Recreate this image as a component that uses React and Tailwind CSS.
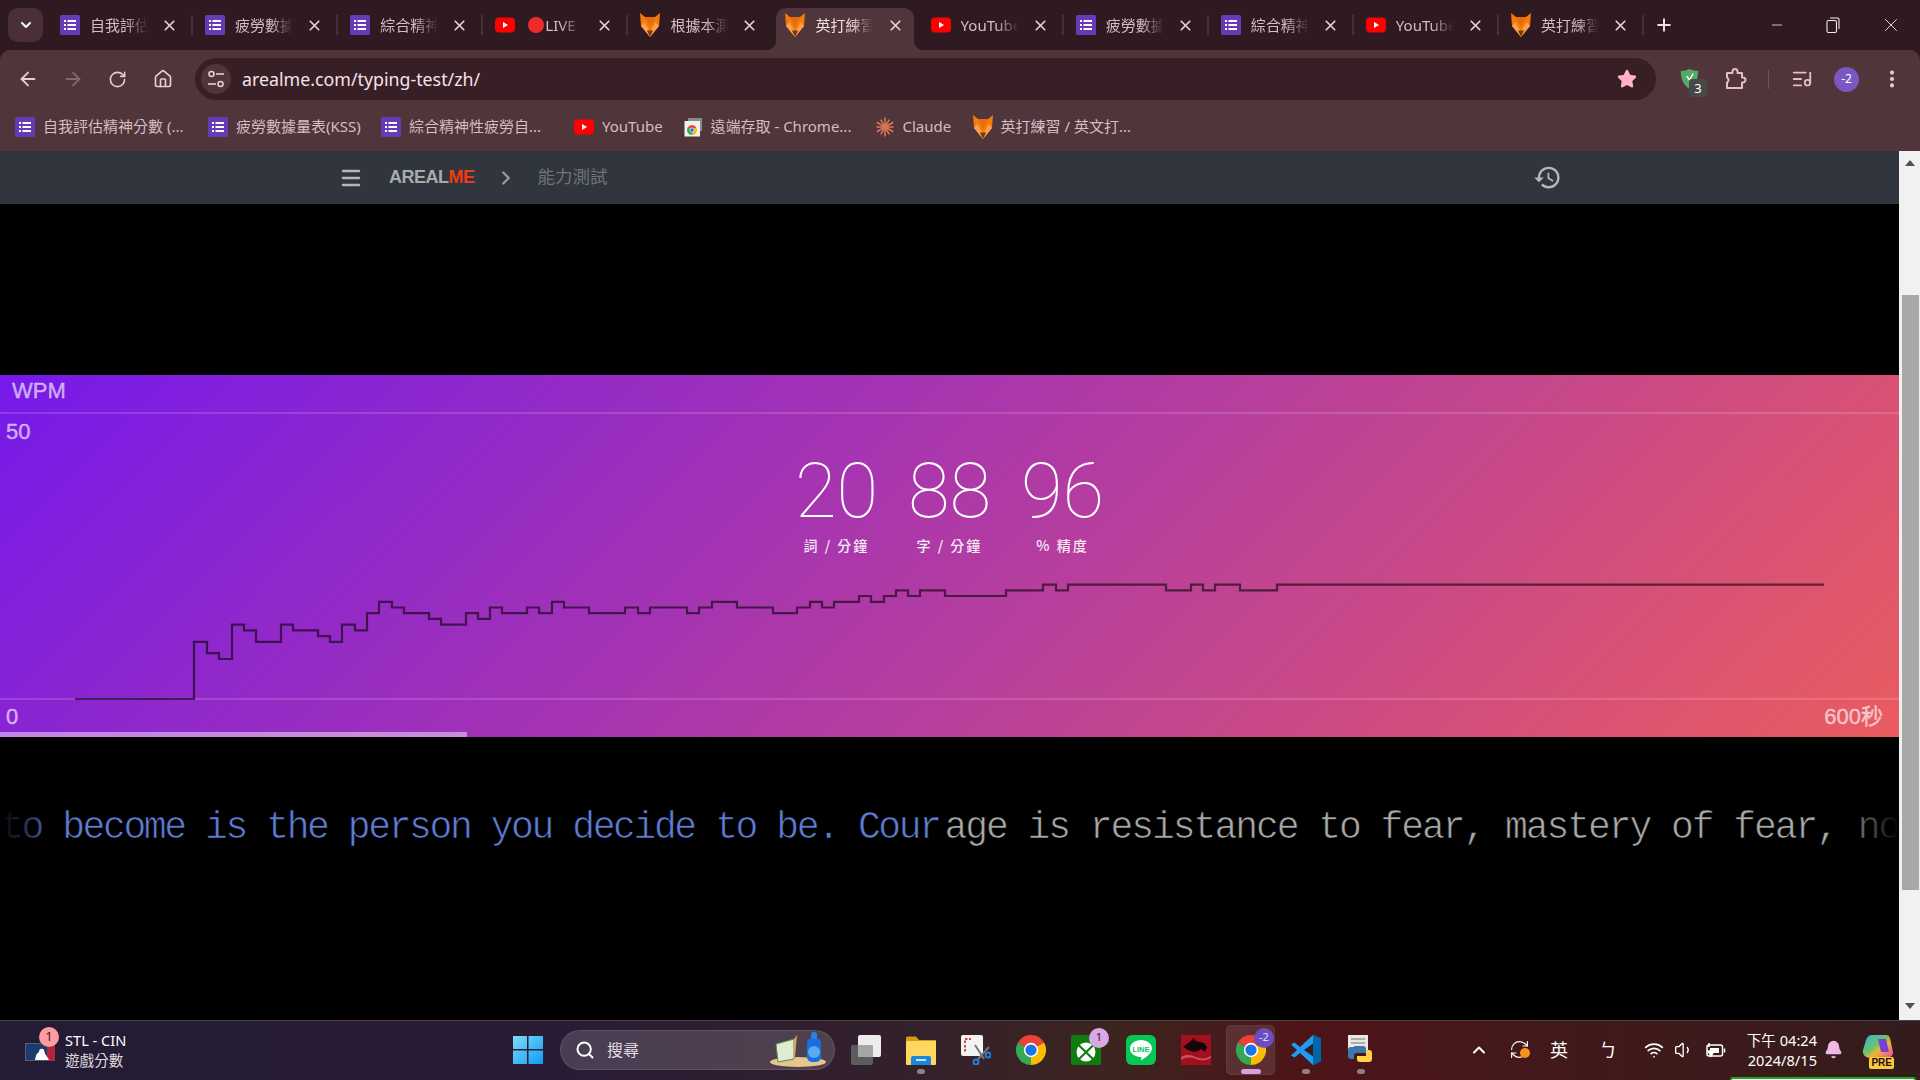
import React from 'react';
import {
  ArrowLeft, ArrowRight, Bell, ChevronDown, ChevronRight, ChevronUp, EllipsisVertical, House,
  ListMusic, Menu, Minus, Plus, RefreshCw, RotateCw, Search, Star, Volume1, Wifi, X,
} from 'lucide-react';

function FormsIcon({ size = 20 }) {
  return (
    <svg width={size} height={size} viewBox="0 0 20 20" className="shrink-0">
      <rect width="20" height="20" rx="1.5" fill="#673ab7" />
      <g fill="#fff">
        <rect x="4" y="5" width="2" height="2" />
        <rect x="7.5" y="5" width="8.5" height="2" />
        <rect x="4" y="9" width="2" height="2" />
        <rect x="7.5" y="9" width="8.5" height="2" />
        <rect x="4" y="13" width="2" height="2" />
        <rect x="7.5" y="13" width="8.5" height="2" />
      </g>
    </svg>
  );
}

function YouTubeIcon({ size = 20 }) {
  return (
    <svg width={size} height={size} viewBox="0 0 20 20" className="shrink-0">
      <rect y="2.5" width="20" height="15" rx="4" fill="#f00" />
      <path d="M8 7l5 3-5 3z" fill="#fff" />
    </svg>
  );
}

function FoxIcon({ size = 20 }) {
  return (
    <svg width={size} height={size + 4} viewBox="0 0 20 24" className="shrink-0">
      <path d="M0 0l5 4h10l5-4-1 13-9 11-9-11z" fill="#f47a0e" />
      <path d="M5 4h10l-5 10z" fill="#e86d05" />
      <path d="M1 13l3.500-4L10 19l5.500-10 3.500 4-9 11z" fill="#f8a050" />
      <path d="M7 17.500h6L10 24z" fill="#7a3a08" />
    </svg>
  );
}

function ClaudeIcon() {
  const rays = [0, 30, 60, 90, 120, 150, 180, 210, 240, 270, 300, 330];
  return (
    <svg width="20" height="20" viewBox="0 0 20 20" className="shrink-0">
      {rays.map((r, i) => (
        <rect key={r} x="9.2" y={i % 2 ? 1.5 : 0.5} width="1.6" height="9" fill="#d97757" transform={`rotate(${r} 10 10)`} />
      ))}
    </svg>
  );
}

function ChromeIcon({ size = 30 }) {
  return (
    <svg width={size} height={size} viewBox="0 0 48 48" className="shrink-0">
      <path d="M24 24L3.2 12A24 24 0 0 1 44.8 12z" fill="#ea4335" />
      <path d="M24 24L44.8 12A24 24 0 0 1 24 48z" fill="#fbbc04" />
      <path d="M24 24L24 48A24 24 0 0 1 3.2 12z" fill="#34a853" />
      <circle cx="24" cy="24" r="11.5" fill="#fff" />
      <circle cx="24" cy="24" r="9" fill="#1a73e8" />
    </svg>
  );
}

function RemoteIcon() {
  return (
    <svg width="18" height="20" viewBox="0 0 18 20" className="shrink-0">
      <rect x="4" y="1" width="14" height="13" fill="#8a8a8a" />
      <rect x="0.5" y="4" width="15.5" height="15.5" fill="#f1f1f1" />
      <g transform="translate(3 8) scale(0.21)">
        <path d="M24 24L3.2 12A24 24 0 0 1 44.8 12z" fill="#ea4335" />
        <path d="M24 24L44.8 12A24 24 0 0 1 24 48z" fill="#fbbc04" />
        <path d="M24 24L24 48A24 24 0 0 1 3.2 12z" fill="#34a853" />
        <circle cx="24" cy="24" r="10" fill="#1a73e8" stroke="#fff" strokeWidth="3" />
      </g>
    </svg>
  );
}

function TabIcon({ type }) {
  if (type === 'forms') return <FormsIcon />;
  if (type === 'yt') return <YouTubeIcon />;
  return <FoxIcon />;
}

const tabs = [
  { icon: 'forms', title: '自我評估' },
  { icon: 'forms', title: '疲勞數據' },
  { icon: 'forms', title: '綜合精神' },
  { icon: 'yt', title: 'LIVE', live: true },
  { icon: 'fox', title: '根據本測' },
  { icon: 'fox', title: '英打練習', active: true },
  { icon: 'yt', title: 'YouTube' },
  { icon: 'forms', title: '疲勞數據' },
  { icon: 'forms', title: '綜合精神' },
  { icon: 'yt', title: 'YouTube' },
  { icon: 'fox', title: '英打練習' },
];

function Tab({ tab, showSep }) {
  return (
    <div className="relative h-[50px] w-[145.100px] shrink-0">
      {tab.active && (
        <>
          <div className="absolute left-1 right-1 top-2 bottom-0 rounded-t-[10px] bg-[#50353b]" />
          <div className="absolute bottom-0 left-[-6px] h-[10px] w-[10px] bg-[radial-gradient(circle_at_0_0,transparent_10px,#50353b_10.5px)]" />
          <div className="absolute bottom-0 right-[-6px] h-[10px] w-[10px] bg-[radial-gradient(circle_at_100%_0,transparent_10px,#50353b_10.5px)]" />
        </>
      )}
      <div className="relative flex h-full items-center pl-[13px] pr-[14px]">
        <div className="flex w-[20px] justify-center"><TabIcon type={tab.icon} /></div>
        <div className={`ml-[10px] flex w-[58px] items-center overflow-hidden whitespace-nowrap text-[15px] [mask-image:linear-gradient(90deg,#000_60%,transparent)] ${tab.active ? 'text-[#f0dfe3]' : 'text-[#d8bcc3]'}`}>
          {tab.live && <span className="ml-[3px] mr-[1px] inline-block h-[16px] w-[16px] shrink-0 rounded-full bg-[#ee2a2a]" />}
          {tab.title}
        </div>
        <X className="ml-auto text-[#e8cdd3]" size={17} strokeWidth={2.4} />
      </div>
      {showSep && <div className="absolute right-[-1px] top-[15px] h-[20px] w-[2px] bg-[#4a3036]" />}
    </div>
  );
}

function TabStrip() {
  return (
    <div className="flex h-[50px] items-center bg-[#301a21] pl-2">
      <div className="flex h-[34px] w-[35px] items-center justify-center rounded-[10px] bg-[#4a3036] text-white">
        <ChevronDown size={16} strokeWidth={3} />
      </div>
      <div className="ml-1 flex">
        {tabs.map((t, i) => (
          <Tab key={i} tab={t} showSep={i !== 4 && i !== 5} />
        ))}
      </div>
      <Plus className="ml-[11px] text-[#f0dde1]" size={20} strokeWidth={2.4} />
      <div className="ml-auto flex items-center text-[#f3e8ea]">
        <div className="flex w-[54px] justify-center"><Minus size={16} strokeWidth={1.2} /></div>
        <div className="flex w-[58px] justify-center">
          <svg width="14" height="16" viewBox="0 0 14 16" fill="none" stroke="currentColor" strokeWidth="1.1">
            <rect x="1" y="3.5" width="9.5" height="12" rx="1.5" />
            <path d="M4 1h7.5A1.5 1.5 0 0 1 13 2.5V12" />
          </svg>
        </div>
        <div className="flex w-[58px] justify-center"><X size={22} strokeWidth={1} /></div>
      </div>
    </div>
  );
}

function NavSlot({ children, className = '' }) {
  return <div className={`flex w-[45px] shrink-0 items-center justify-center ${className}`}>{children}</div>;
}

function TuneIcon() {
  return (
    <svg width="16" height="18" viewBox="0 0 16 18" fill="none" stroke="#e8cdd3" strokeWidth="1.6">
      <circle cx="3.5" cy="4" r="2.5" />
      <path d="M8 4h8" />
      <circle cx="12.5" cy="14" r="2.5" />
      <path d="M0 14h8" />
    </svg>
  );
}

function ExtensionIcon() {
  return (
    <svg width="24" height="24" viewBox="0 0 24 24" fill="none" stroke="#e8bcc6" strokeWidth="2" strokeLinejoin="round">
      <path d="M4 6h5.500V4.500a2.500 2.500 0 0 1 5 0V6H19v4.500h1a2.500 2.500 0 0 1 0 5h-1V21H4v-5.500a2.800 2.800 0 0 0 0-5z" />
    </svg>
  );
}

const bookmarks = [
  { icon: <FormsIcon />, label: '自我評估精神分數 (...', width: 'w-[139px]', gap: 'mr-[26px]' },
  { icon: <FormsIcon />, label: '疲勞數據量表(KSS)', width: 'w-[125px]', gap: 'mr-[20px]' },
  { icon: <FormsIcon />, label: '綜合精神性疲勞自...', width: 'w-[131px]', gap: 'mr-[34px]' },
  { icon: <YouTubeIcon />, label: 'YouTube', width: 'w-[60px]', gap: 'mr-[20.500px]' },
  { icon: <RemoteIcon />, label: '遠端存取 - Chrome...', width: 'w-[142px]', gap: 'mr-[22px]' },
  { icon: <ClaudeIcon />, label: 'Claude', width: 'w-[50px]', gap: 'mr-[20px]' },
  { icon: <FoxIcon />, label: '英打練習 / 英文打...', width: 'w-[130px]', gap: '' },
];

function Toolbar() {
  return (
    <div className="h-[101px] rounded-t-[10px] bg-[#50353b]">
      <div className="flex h-[50px] items-end pl-[5px]">
        <div className="flex h-[42px] items-center">
          <NavSlot><ArrowLeft size={22} className="text-[#e8cdd3]" strokeWidth={2} /></NavSlot>
          <NavSlot><ArrowRight size={22} className="text-[#85686e]" strokeWidth={2} /></NavSlot>
          <NavSlot><RotateCw size={19} className="text-[#e8cdd3]" strokeWidth={2} /></NavSlot>
          <NavSlot><House size={20} className="text-[#e8cdd3]" strokeWidth={2} /></NavSlot>
        </div>
        <div className="ml-[10px] flex h-[42px] w-[1461px] items-center rounded-full bg-[#381f26] pl-[6px] pr-[19px]">
          <div className="flex h-[30px] w-[30px] items-center justify-center rounded-full bg-[#50353b]"><TuneIcon /></div>
          <span className="ml-[11px] text-[17.800px] text-[#f3e4e7]">arealme.com/typing-test/zh/</span>
          <Star className="ml-auto" size={20} fill="#ffb3c4" color="#ffb3c4" />
        </div>
        <div className="ml-[11px] flex h-[42px] items-center">
          <NavSlot className="relative">
            <svg width="21" height="22" viewBox="0 0 22 24">
              <path d="M11 1c3 1.500 6 2 9.500 2 0 8-2 15-9.500 20C3.500 18 1.500 11 1.500 3 5 3 8 2.500 11 1z" fill="#55a868" />
              <path d="M8 9l3 4 4-7" fill="none" stroke="#fff" strokeWidth="1.500" />
            </svg>
            <span className="absolute left-[22px] top-[11px] flex h-[18px] w-[18px] items-center justify-center rounded-[3px] bg-[#484848] text-[13px] leading-none text-white">3</span>
          </NavSlot>
          <NavSlot><ExtensionIcon /></NavSlot>
          <div className="mx-[10.500px] h-[19px] w-[1px] bg-[#6f5359]" />
          <NavSlot><ListMusic size={22} className="text-[#e8bcc6]" strokeWidth={2} /></NavSlot>
          <NavSlot>
            <div className="flex h-[25px] w-[25px] items-center justify-center rounded-full bg-[#7b57c4] text-[12px] text-white">-2</div>
          </NavSlot>
          <NavSlot><EllipsisVertical size={22} className="text-[#e8cdd3]" strokeWidth={2.5} /></NavSlot>
        </div>
      </div>
      <div className="flex h-[51px] items-center pl-[15px] pt-[2px] text-[15px] text-[#d8bcc3]">
        {bookmarks.map((b) => (
          <div key={b.label} className={`flex items-center ${b.gap}`}>
            <div className="flex w-[20px] justify-center">{b.icon}</div>
            <span className={`ml-[8px] whitespace-nowrap ${b.width}`}>{b.label}</span>
          </div>
        ))}
      </div>
    </div>
  );
}

// x where each step of the curve starts, with its wpm value
const curve = [
  [75, 0], [194, 10], [207, 8], [219, 7], [232, 13], [244, 12], [256, 10], [281, 13], [293, 12], [318, 11], [330, 10],
  [342, 13], [355, 12], [367, 15], [379, 17], [392, 16], [404, 15], [429, 14], [441, 13], [466, 15], [478, 14], [490, 16],
  [502, 15], [527, 16], [539, 15], [552, 17], [564, 16], [589, 15], [625, 16], [638, 15], [650, 16], [687, 15], [699, 16],
  [712, 17], [737, 16], [773, 15], [797, 16], [810, 17], [822, 16], [834, 17], [859, 18], [871, 17], [884, 18], [896, 19],
  [908, 18], [920, 19], [945, 18], [1006, 19], [1043, 20], [1056, 19], [1068, 20], [1166, 19], [1191, 20], [1203, 19],
  [1215, 20], [1240, 19], [1277, 20],
];

function curvePath() {
  const toY = (w) => (324 - w * 5.72).toFixed(1);
  let d = `M${curve[0][0]} ${toY(curve[0][1])}`;
  curve.slice(1).forEach(([x, w]) => {
    d += `H${x}V${toY(w)}`;
  });
  return `${d}H1824`;
}

const stats = [
  { value: '20', label: '詞 / 分鐘' },
  { value: '88', label: '字 / 分鐘' },
  { value: '96', label: '% 精度' },
];

function ResultChart() {
  return (
    <div className="relative flex h-[362px] flex-col bg-[linear-gradient(135deg,#7619ea,#ea5c60)] font-['Liberation_Sans','Noto_Sans_CJK_TC',sans-serif] text-[22px] leading-none text-white/60 [-webkit-text-stroke:0.4px_rgba(255,255,255,0.6)]">
      <div className="flex h-[39px] items-center border-b-2 border-white/15 pb-[6px] pl-[12px]">WPM</div>
      <div className="h-[286px] border-b-2 border-white/15 pl-[6px] pt-[7px]">50</div>
      <div className="flex flex-1 justify-between pl-[6px] pr-[16px] pt-[6px]">
        <span>0</span>
        <span>600秒</span>
      </div>
      <div className="absolute bottom-0 left-0 h-[5px] w-[467px] bg-white/45" />
      <svg className="absolute left-0 top-0" width="1899" height="362" fill="none">
        <path d={curvePath()} stroke="#000" strokeOpacity="0.58" strokeWidth="2.2" />
      </svg>
      <div className="absolute left-1/2 top-[77px] flex -translate-x-1/2 text-white [-webkit-text-stroke:0]">
        {stats.map((s) => (
          <div key={s.value} className="flex w-[113px] flex-col items-center">
            <span className="font-['Roboto',sans-serif] text-[76px] font-thin leading-[78px]">{s.value}</span>
            <span className="mt-[5px] font-['Noto_Sans_CJK_TC',sans-serif] text-[14px] font-medium leading-[20px] tracking-[2px] text-white/90">{s.label}</span>
          </div>
        ))}
      </div>
    </div>
  );
}

function TypingLine() {
  return (
    <div className="relative h-[283px] overflow-hidden bg-black pl-[1px] pt-[71px]">
      <div className="whitespace-nowrap font-['Liberation_Mono',monospace] text-[38px] leading-[40px] [-webkit-text-stroke:0.7px_#000]">
        <span className="tracking-[-2.400px] text-[#5f7dd6]">to become is the person you decide to be. Cour</span>
        <span className="ml-[5px] tracking-[-2.050px] text-[#a8a8a8]">age is resistance to fear, mastery of fear, no</span>
      </div>
      <div className="absolute bottom-0 left-0 top-0 w-[60px] bg-gradient-to-r from-black to-transparent" />
      <div className="absolute bottom-0 right-0 top-0 w-[60px] bg-gradient-to-l from-black to-transparent" />
    </div>
  );
}

function HistoryIcon() {
  return (
    <svg width="29" height="29" viewBox="0 0 24 24" fill="#b4b6b8" className="shrink-0">
      <path d="M13 3a9 9 0 0 0-9 9H1l3.890 3.890.07.140L9 12H6c0-3.870 3.130-7 7-7s7 3.130 7 7-3.130 7-7 7c-1.930 0-3.680-.79-4.940-2.060l-1.420 1.420A8.954 8.954 0 0 0 13 21a9 9 0 0 0 0-18zm-1 5v5l4.280 2.540.72-1.210-3.500-2.080V8H12z" />
    </svg>
  );
}

function PageNav() {
  return (
    <div className="flex h-[53px] items-center bg-[#30353e] pl-[339px] font-['Liberation_Sans','Noto_Sans_CJK_TC',sans-serif]">
      <Menu size={24} className="text-[#b4b6b8]" strokeWidth={2.5} />
      <span className="ml-[26px] text-[18px] font-bold tracking-[-0.5px] text-[#a8abab]">AREAL<span className="text-[#ee3c14]">ME</span></span>
      <ChevronRight size={22} className="ml-[20px] text-[#9a9d9f]" strokeWidth={2.4} />
      <span className="ml-[21px] text-[17.500px] text-[#6f747a]">能力測試</span>
      <div className="ml-[925px]"><HistoryIcon /></div>
    </div>
  );
}

function Scrollbar() {
  return (
    <div className="flex w-[21px] shrink-0 flex-col items-center bg-[#f1f1f1]">
      <div className="mt-[9px] h-0 w-0 border-x-[5px] border-b-[6px] border-x-transparent border-b-[#505050]" />
      <div className="ml-[1px] mt-[129px] h-[595px] w-[17px] bg-[#a8a8a8]" />
      <div className="mt-[113px] h-0 w-0 border-x-[5px] border-t-[6px] border-x-transparent border-t-[#505050]" />
    </div>
  );
}

function StartIcon() {
  return (
    <svg width="30" height="30" viewBox="0 0 30 30" className="shrink-0">
      <defs>
        <linearGradient id="win" x1="0" y1="0" x2="1" y2="1">
          <stop offset="0" stopColor="#7fdcf8" />
          <stop offset="1" stopColor="#0d9bf5" />
        </linearGradient>
      </defs>
      <path d="M0 1h14v13H0zM15.500 1H30v13H15.500zM0 15.500h14V29H0zM15.500 15.500H30V29H15.500z" fill="url(#win)" />
    </svg>
  );
}

function MlbIcon() {
  return (
    <svg width="30" height="18" viewBox="0 0 30 18">
      <rect width="30" height="18" rx="2.500" fill="#1d3b6b" stroke="#7a7f8a" />
      <path d="M22 0h6a2 2 0 0 1 2 2v14a2 2 0 0 1-2 2h-6z" fill="#b3243a" />
      <path d="M10 17c1-4 1-6 4-8 0-3 2-4 4-3 2 1 1 4 3 6l3 5z" fill="#fff" />
    </svg>
  );
}

function TaskViewIcon() {
  return (
    <svg width="30" height="30" viewBox="0 0 30 30">
      <rect y="10" width="22" height="20" rx="2" fill="#5c5c5c" />
      <rect x="7" y="0" width="23" height="22" rx="2" fill="#ededed" />
      <rect x="7" y="10" width="15" height="12" fill="#a6a6a6" />
    </svg>
  );
}

function FolderIcon() {
  return (
    <svg width="30" height="30" viewBox="0 0 30 30">
      <path d="M0 3a1.500 1.500 0 0 1 1.500-1.500H10L13 5h17v4H0z" fill="#d99a10" />
      <rect y="6" width="30" height="24" rx="1" fill="#fdd75f" />
      <path d="M5 30v-7a2 2 0 0 1 2-2h16a2 2 0 0 1 2 2v7z" fill="#1b87d8" />
      <rect x="10" y="24" width="10" height="2" fill="#bfe3fa" />
    </svg>
  );
}

function SnipIcon() {
  return (
    <svg width="30" height="30" viewBox="0 0 30 30" fill="none">
      <rect width="22" height="21" rx="2" fill="#f3f3f3" />
      <path d="M4 8V4h6" stroke="#d9473a" strokeWidth="2" strokeDasharray="2.500 1.500" />
      <path d="M4 10v7" stroke="#d9473a" strokeWidth="2" strokeDasharray="2.500 1.500" />
      <path d="M14 10l9 14M28 12l-11 12" stroke="#777" strokeWidth="2" />
      <circle cx="15" cy="27" r="2.500" stroke="#1787d8" strokeWidth="2" />
      <circle cx="27" cy="20" r="2.500" stroke="#1787d8" strokeWidth="2" />
    </svg>
  );
}

function XboxIcon() {
  return (
    <svg width="30" height="30" viewBox="0 0 30 30">
      <rect width="30" height="30" rx="1.500" fill="#107c10" />
      <circle cx="15" cy="17" r="9.500" fill="#fff" />
      <path d="M7 9.500L23 25M23 9.500L7 25" stroke="#107c10" strokeWidth="2.200" />
    </svg>
  );
}

function LineIcon() {
  return (
    <svg width="30" height="30" viewBox="0 0 30 30">
      <rect width="30" height="30" rx="6" fill="#06c755" />
      <path d="M15 5c6 0 11 3.700 11 8.500 0 4.500-6 9-11 12 1-3 .5-3.500-1-3.500C8 21.500 4 18 4 13.500 4 8.700 9 5 15 5z" fill="#fff" />
      <text x="15" y="16.500" textAnchor="middle" fontSize="7.500" fontWeight="700" fill="#06c755" fontFamily="Liberation Sans, sans-serif">LINE</text>
    </svg>
  );
}

function MsiIcon() {
  return (
    <svg width="30" height="30" viewBox="0 0 30 30">
      <rect width="30" height="30" fill="#a30f1c" />
      <path d="M2 12L10 6l2-3 3 3 8 2 3 4-2 5-4-3-3 2-4 1-6-2z" fill="#140507" />
      <path d="M0 22c6-3 10-2 15 0s10 2 15-1v2c-5 3-10 3-15 1S6 22 0 25z" fill="#c85060" />
    </svg>
  );
}

function VsCodeIcon() {
  return (
    <svg width="30" height="30" viewBox="0 0 30 30">
      <path d="M22 0l8 3.500v23L22 30 9 18l-5.500 4.500L0 20.500 6 15 0 9.500l3.500-2L9 12z" fill="#1f9cf0" />
      <path d="M22 8.500L13 15l9 6.500z" fill="#321f2a" />
      <path d="M22 0l8 3.500v23L22 30z" fill="#0065a9" />
    </svg>
  );
}

function PythonIcon() {
  return (
    <svg width="30" height="30" viewBox="0 0 30 30">
      <path d="M2 0h20v15H2z" fill="#e8e8e8" />
      <path d="M5 4h14M5 8h14" stroke="#9a9a9a" strokeWidth="1.500" />
      <path d="M8 11h9a3 3 0 0 1 3 3v4h-9a3 3 0 0 0-3 3v3H5a3 3 0 0 1-3-3v-6a3 3 0 0 1 3-3h3z" fill="#3a78ad" />
      <path d="M20 15h3a3 3 0 0 1 3 3v6a3 3 0 0 1-3 3h-9a3 3 0 0 1-3-3v-3h9z" fill="#ffd343" />
    </svg>
  );
}

function SearchArt() {
  return (
    <svg width="56" height="36" viewBox="0 0 56 36">
      <ellipse cx="28" cy="30" rx="28" ry="5" fill="#e8c48e" />
      <path d="M6 12l18-5v20L8 30z" fill="#dfeccf" stroke="#5a8a4a" />
      <path d="M24 7l3-4-2 22-1 2z" fill="#e8a050" />
      <rect x="37" y="6" width="14" height="24" rx="5" fill="#1a6fe0" />
      <circle cx="44" cy="20" r="6" fill="#5aa8f0" />
      <rect x="41" y="0" width="6" height="7" rx="2" fill="#2a80e8" />
    </svg>
  );
}

function CopilotIcon() {
  return (
    <div className="relative h-[32px] w-[32px]">
      <svg width="32" height="26" viewBox="0 0 32 26">
        <defs>
          <linearGradient id="cp" x1="0" y1="0" x2="1" y2="1">
            <stop offset="0" stopColor="#2bb5e8" />
            <stop offset="0.45" stopColor="#6fc36a" />
            <stop offset="0.6" stopColor="#f0b430" />
            <stop offset="1" stopColor="#e04aa8" />
          </linearGradient>
        </defs>
        <path d="M10 1h14c4 0 4 3 5 8l2 9c0 4-3 6-6 6H9C4 24 0 21 1 16l3-10c1-3 3-5 6-5z" fill="url(#cp)" />
        <path d="M16 5h8l3 13h-8z" fill="#7b3fd0" />
      </svg>
      <span className="absolute bottom-[-3px] right-0 rounded-[2px] bg-[#ffc83d] px-[2px] font-['Liberation_Sans',sans-serif] text-[10px] font-bold leading-[12px] text-[#1e1210]">PRE</span>
    </div>
  );
}

function TaskIcon({ children, mark, active, badge }) {
  return (
    <div className="relative flex h-[50px] w-[55px] shrink-0 items-center justify-center">
      {active && <div className="absolute inset-y-0 left-[3px] right-[3px] rounded-[5px] border border-white/5 bg-white/10" />}
      <div className="relative">{children}</div>
      {badge && (
        <span className={`absolute right-[4px] top-[3px] flex h-[20px] w-[20px] items-center justify-center rounded-full text-[11px] ${active ? 'bg-[#6d4cc2] text-white/80' : 'bg-[#dca7e6] text-[#222]'}`}>{badge}</span>
      )}
      {mark && <div className="absolute bottom-[1px] left-1/2 h-[5px] w-[8px] -translate-x-1/2 rounded-full bg-[#8a8385]" />}
      {active && <div className="absolute bottom-[1px] left-1/2 h-[5px] w-[20px] -translate-x-1/2 rounded-full bg-[#d8a0e0]" />}
    </div>
  );
}

function BatteryIcon() {
  return (
    <svg width="20" height="20" viewBox="0 0 20 20" fill="none" stroke="#fff" strokeWidth="1.500">
      <rect x="1" y="5" width="15.500" height="11" rx="2" />
      <path d="M18.500 8.500v4" />
      <path d="M5 16l3-5H2zM3 3v4" fill="#fff" />
      <rect x="4" y="8" width="9" height="5" fill="#fff" stroke="none" />
    </svg>
  );
}

function Taskbar() {
  return (
    <div className="relative flex h-[60px] items-center border-t border-[#4c4248] bg-[linear-gradient(90deg,#241b34_0%,#2a1c35_30%,#33202c_47%,#3c241f_58%,#4e1418_68%,#45181a_78%,#341c1c_100%)] pb-[2px] text-white">
      <div className="flex w-[513px] shrink-0 items-center pl-[25px]">
        <div className="relative mt-[5px]">
          <MlbIcon />
          <span className="absolute left-[14px] top-[-16px] flex h-[20px] w-[20px] items-center justify-center rounded-full bg-[#ff9aa0] text-[13px] text-[#3a1a1a]">1</span>
        </div>
        <div className="ml-[10px] text-[14.600px] leading-[20px]">
          <div>STL - CIN</div>
          <div className="text-[#dcdcdc]">遊戲分數</div>
        </div>
      </div>
      <StartIcon />
      <div className="ml-[17px] flex h-[40px] w-[275px] shrink-0 items-center rounded-full border border-white/10 bg-white/15 pl-[14px] pr-[8px]">
        <Search size={20} strokeWidth={2.4} />
        <span className="ml-[12px] text-[16px] text-[#e2dde2]">搜尋</span>
        <div className="ml-auto"><SearchArt /></div>
      </div>
      <div className="ml-[3px] flex items-center">
        <TaskIcon><TaskViewIcon /></TaskIcon>
        <TaskIcon mark><FolderIcon /></TaskIcon>
        <TaskIcon><SnipIcon /></TaskIcon>
        <TaskIcon><ChromeIcon /></TaskIcon>
        <TaskIcon badge="1"><XboxIcon /></TaskIcon>
        <TaskIcon><LineIcon /></TaskIcon>
        <TaskIcon><MsiIcon /></TaskIcon>
        <TaskIcon active badge="-2"><ChromeIcon /></TaskIcon>
        <TaskIcon mark><VsCodeIcon /></TaskIcon>
        <TaskIcon mark><PythonIcon /></TaskIcon>
      </div>
      <div className="ml-[71px] flex items-center">
        <div className="flex w-[40px] justify-center"><ChevronUp size={20} strokeWidth={2.4} /></div>
        <div className="relative flex w-[40px] justify-center">
          <RefreshCw size={21} strokeWidth={1.3} />
          <span className="absolute left-[21px] top-[9px] h-[10px] w-[10px] rounded-full bg-[#f7931a]" />
        </div>
        <div className="flex w-[40px] justify-center text-[18px] leading-none">英</div>
        <div className="flex w-[58px] justify-center text-[18px] leading-none">ㄅ</div>
        <div className="flex w-[34px] justify-center"><Wifi size={20} strokeWidth={2} /></div>
        <div className="flex w-[26px] justify-center"><Volume1 size={20} strokeWidth={1.6} /></div>
        <div className="flex w-[38px] justify-center"><BatteryIcon /></div>
        <div className="ml-[9px] w-[73px] text-right text-[14.600px] leading-[20px]">
          <div>下午 04:24</div>
          <div>2024/8/15</div>
        </div>
        <div className="flex w-[32px] justify-center"><Bell size={19} fill="#f0b8e8" color="#f0b8e8" /></div>
        <div className="flex w-[58px] justify-center"><CopilotIcon /></div>
      </div>
      <div className="absolute bottom-0 right-[4px] h-[3px] w-[186px] rounded-t-[3px] border-x-2 border-t-2 border-[#1fa81f] bg-white" />
    </div>
  );
}

export default function App() {
  return (
    <div className="flex h-[1080px] w-[1920px] flex-col overflow-hidden bg-[#301a21] font-['Noto_Sans','Noto_Sans_CJK_TC',sans-serif]">
      <TabStrip />
      <Toolbar />
      <div className="flex h-[869px] bg-black">
        <div className="min-w-0 flex-1">
          <PageNav />
          <div className="h-[171px] bg-black" />
          <ResultChart />
          <TypingLine />
        </div>
        <Scrollbar />
      </div>
      <Taskbar />
    </div>
  );
}
